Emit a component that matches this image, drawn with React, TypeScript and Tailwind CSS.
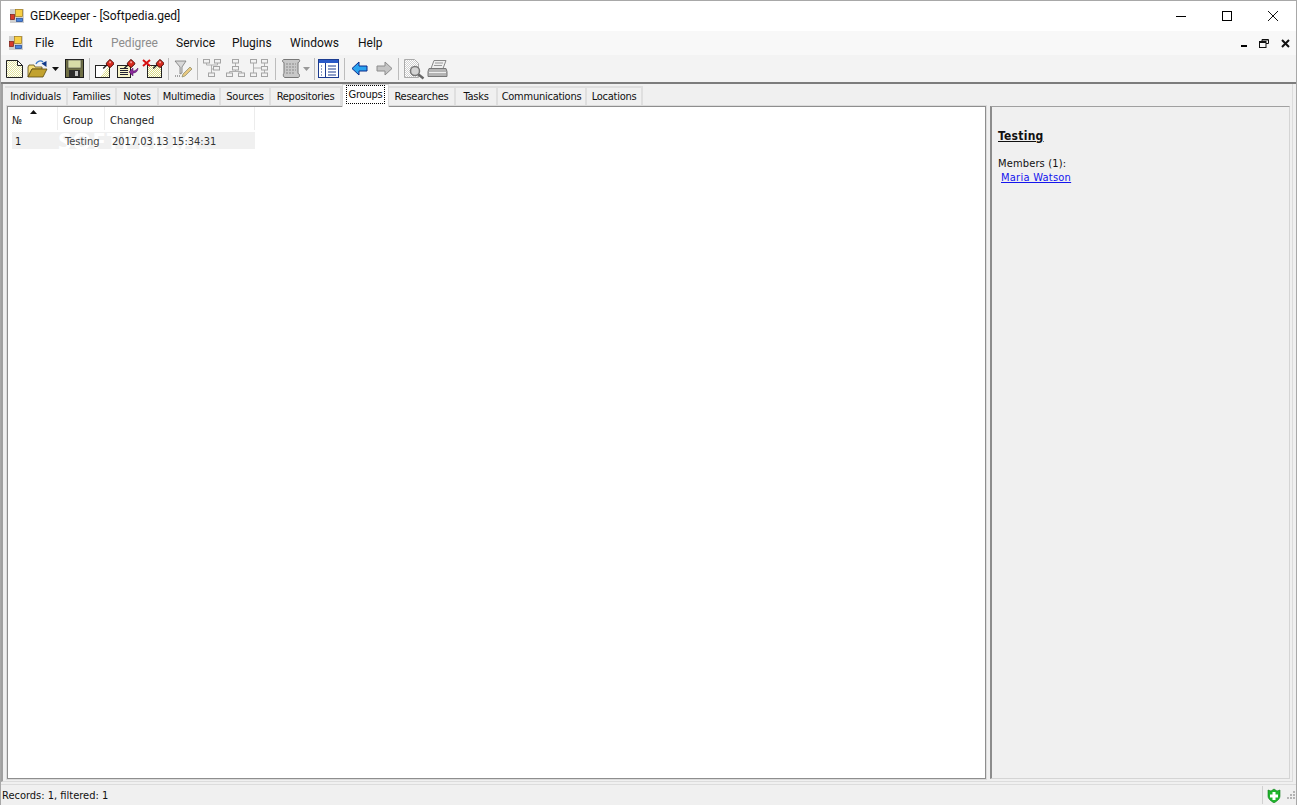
import React from "react";

const tabs = [
  { label: "Individuals", w: "w-[63px]" },
  { label: "Families", w: "w-[49px]" },
  { label: "Notes", w: "w-[42px]" },
  { label: "Multimedia", w: "w-[62px]" },
  { label: "Sources", w: "w-[50px]" },
  { label: "Repositories", w: "w-[71px]" },
  { label: "Groups", w: "w-[47px]", active: true },
  { label: "Researches", w: "w-[67px]" },
  { label: "Tasks", w: "w-[42px]" },
  { label: "Communications", w: "w-[89px]" },
  { label: "Locations", w: "w-[56px]" },
];

const menus = [
  { label: "File", w: "w-[37px]" },
  { label: "Edit", w: "w-[39px]" },
  { label: "Pedigree", w: "w-[65px]", off: true },
  { label: "Service", w: "w-[56px]" },
  { label: "Plugins", w: "w-[58px]" },
  { label: "Windows", w: "w-[68px]" },
  { label: "Help", w: "w-[40px]" },
];

function AppLogo() {
  return (
    <svg width="14" height="14" viewBox="0 0 14 14">
      <rect width="14" height="14" fill="#cfcfcf" />
      <rect x="5.500" y="0.500" width="7" height="7" fill="#f7cf45" stroke="#a07a18" strokeWidth="0.700" />
      <rect x="0.500" y="5.500" width="4" height="5" fill="#d83a2a" stroke="#7a1a10" strokeWidth="0.700" />
      <rect x="6.500" y="9.500" width="6" height="3" fill="#4a84dc" stroke="#1f4a98" strokeWidth="0.700" />
    </svg>
  );
}

function Dither({ id, color }: { id: string; color: string }) {
  return (
    <defs>
      <pattern id={id} width="2" height="2" patternUnits="userSpaceOnUse">
        <rect width="2" height="2" fill="#fff" />
        <rect width="1" height="1" fill={color} />
        <rect x="1" y="1" width="1" height="1" fill={color} />
      </pattern>
    </defs>
  );
}

function Pin() {
  return (
    <g transform="scale(1.200)">
      <path d="M1 8l3-3" stroke="#222" strokeWidth="1.200" />
      <path d="M3.500 3.500l3-3 1 .5 1 1 1 1 .5 1-3 3-1.500-.5-1.500-1.500z" fill="#d62a1e" stroke="#4a0c06" strokeWidth="0.800" />
      <rect x="6" y="2" width="1.500" height="1.500" fill="#f7a09a" />
    </g>
  );
}

function NewFile() {
  return (
    <svg width="19" height="20" viewBox="0 0 19 20">
      <Dither id="d-new" color="#e2e29a" />
      <path d="M1.500 1.500h11l5 5v12h-16z" fill="url(#d-new)" stroke="#222" />
      <path d="M12.500 1.500v5h5z" fill="#fff" stroke="#222" />
    </svg>
  );
}

function OpenFolder() {
  return (
    <svg width="21" height="20" viewBox="0 0 21 20">
      <path d="M1 8l1-2h5l1 2h7v2H5l-4 8z" fill="#f6de7a" stroke="#5a4a10" strokeWidth="0.800" />
      <path d="M1 18l4-8h15l-4 8z" fill="#c2a22e" stroke="#5a4a10" strokeWidth="0.800" />
      <path d="M9 5c1-3 5-4 7-2" fill="none" stroke="#3a78c8" strokeWidth="1.300" />
      <path d="M14.500 4.500l5-2.500v6z" fill="#123a8a" />
    </svg>
  );
}

function SaveDisk() {
  return (
    <svg width="19" height="19" viewBox="0 0 19 19">
      <rect x="0.500" y="0.500" width="18" height="18" fill="#6f6f45" stroke="#1c1c1c" />
      <rect x="3" y="1" width="13" height="8" fill="#d8dca8" stroke="#444" strokeWidth="0.600" />
      <rect x="4" y="11" width="11" height="7" fill="#2d2d2d" />
      <rect x="10" y="12" width="3" height="5" fill="#c4c4c4" />
    </svg>
  );
}

function RecordNew() {
  return (
    <svg width="20" height="20" viewBox="0 0 20 20">
      <Dither id="d-rec" color="#d8d880" />
      <rect x="1.500" y="6.500" width="14" height="12" fill="#fff" stroke="#222" />
      <path d="M15 7L6 18h9z" fill="url(#d-rec)" />
      <g transform="translate(8 0)">
        <Pin />
      </g>
    </svg>
  );
}

function RecordEdit() {
  return (
    <svg width="22" height="20" viewBox="0 0 22 20">
      <rect x="0.500" y="6.500" width="13" height="12" fill="#f7f4c8" stroke="#222" />
      <path d="M3 9.500h8M3 11.500h8M3 13.500h8M3 15.500h8" stroke="#223" strokeWidth="1" />
      <path d="M21 9c0 3-2 5-5 5v3l-4-4 4-4v3c2 0 3-1 5-3z" fill="#8a2a9a" stroke="#4a1060" strokeWidth="0.500" />
      <g transform="translate(6 0)">
        <Pin />
      </g>
    </svg>
  );
}

function RecordDelete() {
  return (
    <svg width="22" height="20" viewBox="0 0 22 20">
      <Dither id="d-del" color="#d8d880" />
      <rect x="5.500" y="6.500" width="14" height="12" fill="url(#d-del)" stroke="#222" />
      <path d="M1 1l7 6M8 1L1 7" stroke="#d81010" strokeWidth="2" />
      <g transform="translate(10 0)">
        <Pin />
      </g>
    </svg>
  );
}

function FilterPen() {
  return (
    <svg width="20" height="19" viewBox="0 0 20 19">
      <path d="M1 2h11L8 8v6l-2 1V8z" fill="#d8d8d8" stroke="#777" strokeWidth="0.800" />
      <path d="M9 15l7-7 2 2-7 7-3 1z" fill="#e8c880" stroke="#886" strokeWidth="0.700" />
      <path d="M1 17h1M3 17h1M5 17h1" stroke="#555" />
    </svg>
  );
}

function TreeIcon({ variant }: { variant: number }) {
  const boxes =
    variant === 0
      ? [[0.5, 0.5], [11.5, 0.5], [10.5, 7.5], [5.5, 14]]
      : variant === 1
        ? [[6.5, 0.5], [6.5, 7.5], [0.5, 14], [12.5, 14]]
        : [[0.5, 0.5], [11.5, 0.5], [11.5, 7.5], [0.5, 14], [11.5, 14]];
  const lines =
    variant === 0
      ? "M3.500 4v2h11V4M8.500 6v8M8.500 10h2"
      : variant === 1
        ? "M9.500 4v3.500M9.500 11v1.500M3.500 14v-1.500h12V14"
        : "M3.500 4v10M14.500 4v3.500M14.500 11v3M3.500 9h8";
  return (
    <svg width="19" height="19" viewBox="0 0 19 19">
      <path d={lines} stroke="#b0b0b0" fill="none" />
      {boxes.map(([x, y], i) => (
        <rect key={i} x={x} y={y} width="6" height="3.500" fill="#f2f2f2" stroke="#a4a4a4" />
      ))}
    </svg>
  );
}

function Scroll() {
  return (
    <svg width="20" height="21" viewBox="0 0 20 21">
      <path d="M3 1.500h15c1 0 1 3-1 3v11c2 0 2 4 0 4H4c-2 0-2-4-1-4v-11c-2 0-2-3 0-3z" fill="#c8c8c8" stroke="#777" />
      <path d="M5 6h10M5 9h10M5 12h10M5 15h8" stroke="#8a8a8a" strokeDasharray="2 1" />
    </svg>
  );
}

function ListView() {
  return (
    <svg width="21" height="19" viewBox="0 0 21 19">
      <rect x="0.500" y="0.500" width="20" height="18" fill="#fff" stroke="#1c3c90" />
      <rect x="1" y="1" width="19" height="3" fill="#2a5ac8" />
      <path d="M7.500 4v14" stroke="#1c3c90" />
      <path d="M10 7h8M10 10h8M10 13h8M10 16h8" stroke="#1c3c90" />
      <path d="M3 7h2M3 10h2M3 13h2M3 16h2" stroke="#1c3c90" strokeDasharray="1 1" />
    </svg>
  );
}

function Arrow({ dir }: { dir: "left" | "right" }) {
  if (dir === "left") {
    return (
      <svg width="17" height="15" viewBox="0 0 17 15">
        <path d="M1 7.500L8 1v4h8v5H8v4z" fill="#2aa4f0" stroke="#0a2a8a" />
      </svg>
    );
  }
  return (
    <svg width="17" height="15" viewBox="0 0 17 15">
      <path d="M16 7.500L9 1v4H1v5h8v4z" fill="#c4c4c4" stroke="#8c8c8c" />
    </svg>
  );
}

function Preview() {
  return (
    <svg width="22" height="22" viewBox="0 0 22 22">
      <Dither id="d-prev" color="#cfcfcf" />
      <path d="M1.500 1.500h10l4 4v14h-14z" fill="url(#d-prev)" stroke="#aaa" />
      <circle cx="12" cy="13" r="4.500" fill="#d4d4d4" stroke="#777" strokeWidth="1.500" />
      <path d="M15.500 16.500l5 4" stroke="#666" strokeWidth="2.500" />
    </svg>
  );
}

function Printer() {
  return (
    <svg width="21" height="20" viewBox="0 0 21 20">
      <path d="M7 1.500h12l-3 8H4z" fill="#eee" stroke="#888" />
      <path d="M8 4h8M7 6.500h8" stroke="#999" />
      <path d="M2 9.500h17l1 3v5H1v-5z" fill="#b4b4b4" stroke="#777" />
      <path d="M2 13.500h17" stroke="#eee" />
    </svg>
  );
}

function Sep({ className }: { className: string }) {
  return <div className={`h-[22px] w-px bg-[#bcbcbc] ${className}`} />;
}

function Caret({ color }: { color: string }) {
  return (
    <svg width="7" height="4" viewBox="0 0 7 4" fill={color}>
      <path d="M0 0h7L3.500 4z" />
    </svg>
  );
}

function ShieldPlus() {
  return (
    <svg width="14" height="15" viewBox="0 0 14 15">
      <path d="M1 2l3 1 3-2 3 2 3-1v6c0 3-3 5-6 7-3-2-6-4-6-7z" fill="#1fb52c" stroke="#0d7a18" strokeWidth="0.600" />
      <path d="M5.500 4h3v2.500H11v3H8.500V12h-3V9.500H3v-3h2.500z" fill="#fff" />
    </svg>
  );
}

function Grip() {
  return (
    <svg width="10" height="10" viewBox="0 0 10 10" fill="#b4b4b4">
      <rect x="7" y="1" width="2" height="2" />
      <rect x="4" y="4" width="2" height="2" />
      <rect x="7" y="4" width="2" height="2" />
      <rect x="1" y="7" width="2" height="2" />
      <rect x="4" y="7" width="2" height="2" />
      <rect x="7" y="7" width="2" height="2" />
    </svg>
  );
}

export default function App() {
  return (
    <div className="flex h-[805px] w-[1297px] flex-col overflow-hidden border-x border-t border-[#a8a8a8] bg-[#f0f0f0] font-['DejaVu_Sans_Condensed','DejaVu_Sans',sans-serif] text-[11px] leading-none text-[#111]">
      {/* Title bar */}
      <div className="flex h-[30px] shrink-0 items-center bg-white">
        <div className="ml-[9px] mr-[6px]">
          <AppLogo />
        </div>
        <span className="font-['Roboto',sans-serif] text-[12px] text-[#111]">GEDKeeper - [Softpedia.ged]</span>
        <div className="ml-auto flex h-full">
          <div className="flex w-[46px] items-center justify-center">
            <div className="h-px w-[10px] bg-black" />
          </div>
          <div className="flex w-[46px] items-center justify-center">
            <div className="size-[10px] border border-black" />
          </div>
          <div className="flex w-[46px] items-center justify-center">
            <svg width="12" height="12" viewBox="0 0 12 12" stroke="#111">
              <path d="M1 1l10 10M11 1L1 11" />
            </svg>
          </div>
        </div>
      </div>

      {/* Menu */}
      <div className="flex h-[24px] shrink-0 items-center bg-[#f8f8f8] font-['Roboto',sans-serif]">
        <div className="ml-[8px] mr-[10px]">
          <AppLogo />
        </div>
        {menus.map((m) => (
          <div
            key={m.label}
            className={`${m.w} text-[12px] ${m.off ? "text-[#8d8d8d]" : "text-[#111]"}`}
          >
            <span className="pl-[2px]">{m.label}</span>
          </div>
        ))}
        <div className="ml-auto mr-[6px] flex items-center gap-[12px]">
          <div className="mt-[6px] h-[2px] w-[6px] bg-black" />
          <svg width="10" height="9" viewBox="0 0 10 9" fill="none" stroke="#111">
            <path d="M3 2.500V.5h6.500v4H7" />
            <rect x="0.500" y="2.500" width="6.500" height="6" />
            <path d="M3 1h6M1 3.500h6" />
          </svg>
          <svg width="9" height="9" viewBox="0 0 9 9" stroke="#111" strokeWidth="2">
            <path d="M1 1l7 7M8 1L1 8" />
          </svg>
        </div>
      </div>

      {/* Toolbar */}
      <div className="flex h-[27px] shrink-0 items-center bg-[#f3f3f3] pl-[4px]">
        <NewFile />
        <div className="ml-[3px]">
          <OpenFolder />
        </div>
        <div className="ml-[4px]">
          <Caret color="#111" />
        </div>
        <div className="ml-[6px]">
          <SaveDisk />
        </div>
        <Sep className="ml-[5px]" />
        <div className="ml-[4px]">
          <RecordNew />
        </div>
        <div className="ml-[3px]">
          <RecordEdit />
        </div>
        <div className="ml-[3px]">
          <RecordDelete />
        </div>
        <Sep className="ml-[4px]" />
        <div className="ml-[5px]">
          <FilterPen />
        </div>
        <Sep className="ml-[3px]" />
        <div className="ml-[5px]">
          <TreeIcon variant={0} />
        </div>
        <div className="ml-[4px]">
          <TreeIcon variant={1} />
        </div>
        <div className="ml-[5px]">
          <TreeIcon variant={2} />
        </div>
        <Sep className="ml-[6px]" />
        <div className="ml-[5px]">
          <Scroll />
        </div>
        <div className="ml-[2px]">
          <Caret color="#999" />
        </div>
        <Sep className="ml-[4px]" />
        <div className="ml-[3px]">
          <ListView />
        </div>
        <Sep className="ml-[5px]" />
        <div className="ml-[6px]">
          <Arrow dir="left" />
        </div>
        <div className="ml-[8px]">
          <Arrow dir="right" />
        </div>
        <Sep className="ml-[5px]" />
        <div className="ml-[4px]">
          <Preview />
        </div>
        <div className="ml-[2px]">
          <Printer />
        </div>
      </div>

      <div className="h-[2px] shrink-0 bg-[#7c7c7c]" />

      {/* Tab control */}
      <div className="mr-[3px] flex min-h-0 flex-1 flex-col border-b border-l-2 border-r border-b-[#dcdcdc] border-l-[#a0a0a0] border-r-[#dcdcdc]">
        <div className="flex h-[21px] shrink-0 items-end pl-[2px] tracking-[-0.25px]">
          {tabs.map((t) =>
            t.active ? (
              <div
                key={t.label}
                className={`${t.w} relative z-10 mb-[-2px] flex h-[23px] items-center justify-center border-x border-t border-[#d9d9d9] bg-white pb-[3px]`}
              >
                <span className="border border-dotted border-black px-[2px] py-[3px] text-[#111]">{t.label}</span>
              </div>
            ) : (
              <div
                key={t.label}
                className={`${t.w} flex h-[19px] items-center justify-center border-r-2 border-t-2 border-[#dfdfdf] text-[#111]`}
              >
                {t.label}
              </div>
            )
          )}
        </div>

        {/* Panels */}
        <div className="mt-[1px] flex min-h-0 flex-1 gap-[4px] pb-[2px] pl-[4px]">
          <div className="relative w-[979px] shrink-0 border border-[#8e8e8e] bg-white shadow-[0_0_0_1px_#dcdcdc]">
            <div className="flex h-[23px] w-[248px] items-center text-[#222]">
              <div className="relative flex h-full w-[50px] items-center border-r border-[#ececec] pl-[4px] pt-[3px]">
                №
                <div className="absolute left-[22px] top-[3px]">
                  <svg width="7" height="4" viewBox="0 0 7 4" fill="#111">
                    <path d="M3.500 0L7 4H0z" />
                  </svg>
                </div>
              </div>
              <div className="flex h-full w-[47px] items-center border-r border-[#ececec] pl-[5px] pt-[3px]">Group</div>
              <div className="flex h-full w-[150px] items-center border-r border-[#ececec] pl-[5px] pt-[3px]">Changed</div>
            </div>
            <div className="relative ml-[4px] mt-[2px] flex h-[17px] w-[243px] items-center bg-[#f0f0f0] pt-[1px] text-[#222]">
              <span className="relative z-10 w-[53px] pl-[3px]">1</span>
              <span className="relative z-10 w-[47px] text-[#444]">Testing</span>
              <span className="relative z-10 text-[#333]">2017.03.13 15:34:31</span>
              <span className="absolute left-[46px] top-[-3px] font-['Noto_Sans',sans-serif] text-[24px] font-bold tracking-[1px] text-white">SOFTPEDIA</span>
            </div>
          </div>

          <div className="w-[300px] shrink-0 border-b border-l-2 border-r border-t border-b-[#d4d4d4] border-l-[#8c8c8c] border-r-[#d4d4d4] border-t-[#a0a0a0] bg-[#f0f0f0] pl-[6px] pt-[23px]">
            <div className="text-[12px] font-bold tracking-[0.25px] underline">Testing</div>
            <div className="mt-[16px] tracking-[0.15px]">Members (1):</div>
            <div className="ml-[3px] mt-[3px] tracking-[0.25px] text-[#1414ee] underline">Maria Watson</div>
          </div>
        </div>
      </div>

      {/* Status bar */}
      <div className="mt-[2px] flex h-[21px] shrink-0 items-center border-t border-[#dcdcdc] bg-[#f0f0f0] pl-[1px]">
        <span>Records: 1, filtered: 1</span>
        <div className="ml-auto flex h-full items-center">
          <div className="h-[18px] w-px bg-[#d0d0d0]" />
          <div className="ml-[4px] mr-[5px]">
            <ShieldPlus />
          </div>
          <Grip />
        </div>
      </div>
    </div>
  );
}
